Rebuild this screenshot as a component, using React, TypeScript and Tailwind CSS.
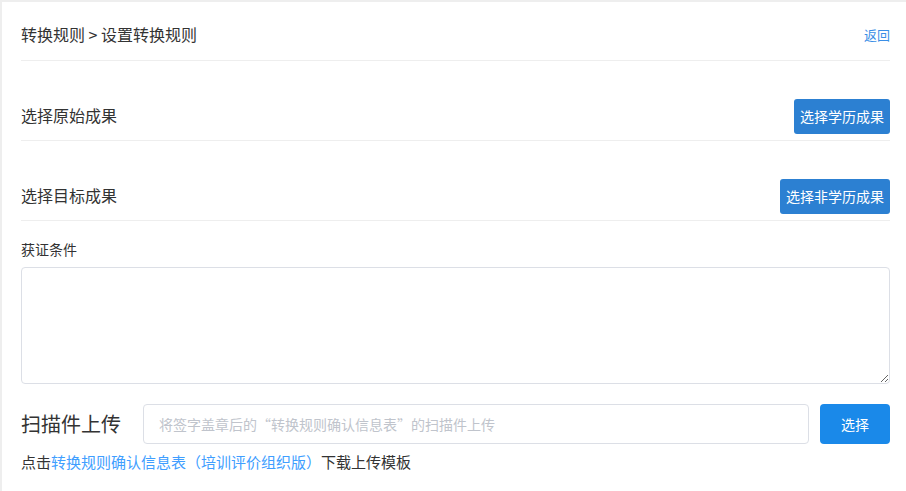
const FONT = { fontFamily: '"Noto Sans CJK SC", "Liberation Sans", sans-serif' };

export default function App() {
  return (
    <div
      className="w-[906px] h-[491px] bg-white border-t-2 border-l-2 border-[#eeeeee] pl-[19px] pr-[16px] text-[#333]"
      style={FONT}
    >
      {/* header */}
      <div className="h-[59px] flex items-end justify-between pb-[15px] border-b border-[#eeeeee]">
        <span className="text-[16px] leading-[22px]">转换规则 &gt; 设置转换规则</span>
        <a className="text-[13px] leading-[20px] text-[#3a8ee6] cursor-pointer">返回</a>
      </div>

      <div className="h-[80px] flex items-end justify-between pb-[6px] border-b border-[#eeeeee]">
        <span className="text-[16px] leading-[34px] pb-[2px]">选择原始成果</span>
        <button className="h-[35px] px-[6px] rounded-[3px] bg-[#2c80d2] text-white text-[14px]">选择学历成果</button>
      </div>

      <div className="h-[80px] flex items-end justify-between pb-[6px] border-b border-[#eeeeee]">
        <span className="text-[16px] leading-[34px] pb-[2px]">选择目标成果</span>
        <button className="h-[35px] px-[6px] rounded-[3px] bg-[#2c80d2] text-white text-[14px]">选择非学历成果</button>
      </div>

      <div className="pt-[18px] text-[14px] leading-[20px]">获证条件</div>
      <textarea className="mt-[8px] block w-full h-[117px] border border-[#dcdfe6] rounded-[4px] outline-none resize-y" />

      <div className="mt-[20px] flex items-center">
        <span className="w-[122px] text-[20px] leading-[40px]">扫描件上传</span>
        <div className="flex-1 h-[40px] border border-[#dcdfe6] rounded-[4px] flex items-center px-[15px] text-[14px] text-[#c0c4cc]">
          将签字盖章后的“转换规则确认信息表”的扫描件上传
        </div>
        <button className="ml-[11px] w-[70px] h-[40px] rounded-[4px] bg-[#1a89e9] text-white text-[14px]">选择</button>
      </div>

      <div className="mt-[7px] text-[15px] leading-[22px]">
        点击<a className="text-[#409eff] cursor-pointer">转换规则确认信息表（培训评价组织版）</a>下载上传模板
      </div>
    </div>
  );
}
